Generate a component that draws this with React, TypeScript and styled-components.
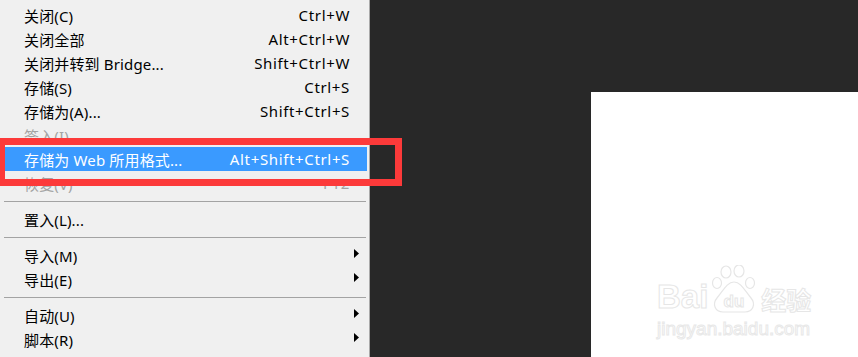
import styled, { createGlobalStyle } from "styled-components";

const GlobalStyle = createGlobalStyle`
    html, body {
        margin: 0;
        padding: 0;
        background: #282828;
        overflow: hidden;
    }
`;

const Screen = styled.div`
    position: relative;
    display: flex;
    width: 858px;
    height: 357px;
    font-family: "Noto Sans", "Noto Sans CJK SC", sans-serif;
    font-size: 15px;
`;

const Menu = styled.div`
    width: 370px;
    height: 100%;
    box-sizing: border-box;
    display: flex;
    flex-direction: column;
    padding-top: 3px;
    background: #f0f0f0;
    border-right: 1px solid #a9a9a9;
`;

const Item = styled.div<{ $active?: boolean; $disabled?: boolean }>`
    display: flex;
    align-items: center;
    justify-content: space-between;
    height: 24px;
    flex-shrink: 0;
    margin: 0 2px 0 5px;
    padding: 0 8px 0 19px;
    background: ${(p) => (p.$active ? "#3a9aff" : "transparent")};
    color: ${(p) => (p.$active ? "#ffffff" : p.$disabled ? "#a3a3a3" : "#000000")};
    white-space: nowrap;
`;

const Label = styled.span`
    letter-spacing: 0.15px;
`;

const Shortcut = styled.span`
    margin-right: 9px;
    letter-spacing: 0.65px;
`;

const Arrow = styled.svg`
    width: 5px;
    height: 9px;
    margin-top: -4px;
`;

const Separator = styled.div`
    height: 12px;
    flex-shrink: 0;
    display: flex;
    align-items: center;
    padding: 0 3px 0 4px;

    &::after {
        content: "";
        flex: 1;
        height: 1px;
        background: #a3a3a3;
    }
`;

const Canvas = styled.div`
    flex: 1;
    display: flex;
    padding: 92px 0 0 221px;
    background: #282828;
`;

const Page = styled.div`
    flex: 1;
    display: flex;
    flex-direction: column;
    align-items: flex-start;
    padding: 173px 0 0 66px;
    background: #ffffff;
`;

const Logo = styled.div`
    display: flex;
    align-items: flex-end;
    gap: 3px;
`;

const LogoWord = styled.span<{ $size: number }>`
    font-family: "Liberation Sans", Arial, sans-serif;
    font-weight: bold;
    font-size: ${(p) => p.$size}px;
    line-height: 1;
    color: #ffffff;
    -webkit-text-stroke: 1px #e6e6e6;
`;

const LogoCjk = styled(LogoWord)`
    font-family: "Noto Sans CJK SC", sans-serif;
    margin-bottom: 1px;
`;

const Domain = styled.span`
    margin-top: 6px;
    font-family: "Liberation Sans", Arial, sans-serif;
    font-size: 19px;
    line-height: 1;
    color: #ffffff;
    -webkit-text-stroke: 1px #e8e8e8;
`;

const RedBox = styled.div`
    position: absolute;
    left: -2px;
    top: 138px;
    width: 404px;
    height: 48px;
    box-sizing: border-box;
    border: 7px solid #fc3a3a;
`;

type Entry =
    | { label: string; key?: string; sub?: boolean; active?: boolean; disabled?: boolean }
    | "sep";

const entries: Entry[] = [
    { label: "关闭(C)", key: "Ctrl+W" },
    { label: "关闭全部", key: "Alt+Ctrl+W" },
    { label: "关闭并转到 Bridge...", key: "Shift+Ctrl+W" },
    { label: "存储(S)", key: "Ctrl+S" },
    { label: "存储为(A)...", key: "Shift+Ctrl+S" },
    { label: "签入(I)...", disabled: true },
    { label: "存储为 Web 所用格式...", key: "Alt+Shift+Ctrl+S", active: true },
    { label: "恢复(V)", key: "F12", disabled: true },
    "sep",
    { label: "置入(L)..." },
    "sep",
    { label: "导入(M)", sub: true },
    { label: "导出(E)", sub: true },
    "sep",
    { label: "自动(U)", sub: true },
    { label: "脚本(R)", sub: true },
];

function Paw() {
    return (
        <svg width="47" height="48" viewBox="0 0 47 48" fill="#ffffff" stroke="#e6e6e6" strokeWidth="1.2">
            <ellipse cx="15" cy="7" rx="5" ry="6" />
            <ellipse cx="28" cy="6" rx="5" ry="6" />
            <ellipse cx="6" cy="18" rx="4.5" ry="5.5" />
            <ellipse cx="39" cy="18" rx="4.5" ry="5.5" />
            <path d="M23 17 C16 17 12 26 6 33 C1 39 4 47 12 47 L34 47 C42 47 45 39 40 33 C34 26 30 17 23 17 Z" />
            <text x="23" y="42" textAnchor="middle" fontFamily="Liberation Sans, Arial, sans-serif" fontWeight="bold" fontSize="17" fill="#ffffff" stroke="#e6e6e6" strokeWidth="1">du</text>
        </svg>
    );
}

function App() {
    return (
        <Screen>
            <GlobalStyle />
            <Menu>
                {entries.map((e, i) =>
                    e === "sep" ? (
                        <Separator key={i} />
                    ) : (
                        <Item key={i} $active={e.active} $disabled={e.disabled}>
                            <Label>{e.label}</Label>
                            {e.sub ? (
                                <Arrow viewBox="0 0 5 9">
                                    <path d="M0 0 L5 4.5 L0 9 Z" fill="#000000" />
                                </Arrow>
                            ) : e.key ? (
                                <Shortcut>{e.key}</Shortcut>
                            ) : null}
                        </Item>
                    )
                )}
            </Menu>
            <Canvas>
                <Page>
                    <Logo>
                        <LogoWord $size={33}>Bai</LogoWord>
                        <Paw />
                        <LogoCjk $size={25}>经验</LogoCjk>
                    </Logo>
                    <Domain>jingyan.baidu.com</Domain>
                </Page>
            </Canvas>
            <RedBox />
        </Screen>
    );
}

export default App;
